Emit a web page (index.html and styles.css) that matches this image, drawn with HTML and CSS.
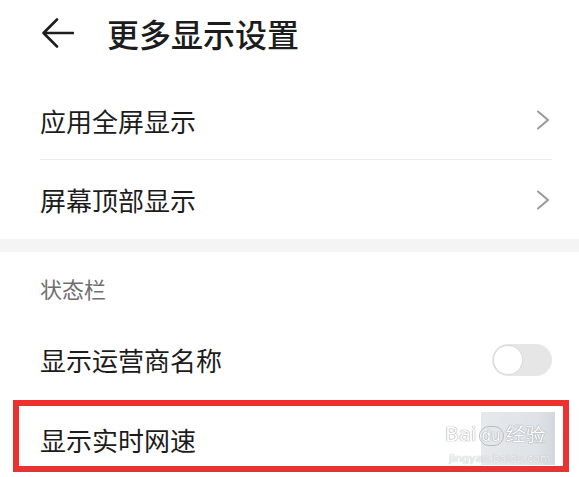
FILE: index.html
```html
<!DOCTYPE html>
<html>

<head>
  <title>更多显示设置</title>
  <link rel="stylesheet" href="styles.css">
</head>

<body>

  <div class="header">
    <svg class="back" width="32" height="30" viewBox="0 0 32 30">
      <path d="M31 15 H2 M15 1.5 L1.5 15 L15 28.5" fill="none" stroke="#1e1e1e" stroke-width="2.6" stroke-linecap="round" stroke-linejoin="round"/>
    </svg>
    <h1>更多显示设置</h1>
  </div>

  <div class="group">
    <div class="row">
      <span>应用全屏显示</span>
      <svg class="chevron" width="14" height="20" viewBox="0 0 14 20">
        <path d="M2 1.5 L12 10 L2 18.5" fill="none" stroke="#9a9a9a" stroke-width="2" stroke-linecap="round" stroke-linejoin="round"/>
      </svg>
    </div>
    <div class="row">
      <span>屏幕顶部显示</span>
      <svg class="chevron" width="14" height="20" viewBox="0 0 14 20">
        <path d="M2 1.5 L12 10 L2 18.5" fill="none" stroke="#9a9a9a" stroke-width="2" stroke-linecap="round" stroke-linejoin="round"/>
      </svg>
    </div>
  </div>

  <div class="band"></div>

  <div class="group">
    <div class="subhead">状态栏</div>
    <div class="row">
      <span>显示运营商名称</span>
      <div class="switch"><div class="knob"></div></div>
    </div>
    <div class="row last">
      <span>显示实时网速</span>
    </div>
  </div>

  <div class="highlight"></div>

  <div class="watermark">
    <div class="wm-back"></div>
    <div class="wm-logo">Bai<span class="paw">du</span>经验</div>
    <div class="wm-url">jingyan.baidu.com</div>
  </div>

</body>

</html>
```

FILE: styles.css
```css
body {
  margin: 0;
  background-color: white;
  font-family: "Noto Sans CJK SC", "Noto Sans", sans-serif;
  color: #1c1c1c;
  overflow: hidden;
  position: relative;
  height: 477px;
}

.header {
  height: 81px;
  display: flex;
  align-items: center;
  padding: 0 0 16px 42px;
  box-sizing: border-box;
}

.back {
  margin-right: 33px;
}

h1 {
  margin: 0;
  font-size: 32px;
  font-weight: 500;
  line-height: 40px;
}

.group {
  padding: 0 27px 0 40px;
}

.row {
  height: 78px;
  display: flex;
  align-items: center;
  justify-content: space-between;
  border-bottom: 1px solid #ececec;
  font-size: 26px;
}

.row.last {
  border-bottom: none;
  height: 80px;
}

.group .row:nth-child(2) {
  border-bottom: none;
  height: 79px;
}

.chevron {
  margin-right: 2px;
}

.band {
  height: 13px;
  background-color: #f4f4f4;
}

.subhead {
  height: 68px;
  padding-top: 24px;
  box-sizing: border-box;
  font-size: 22px;
  line-height: 24px;
  color: #6f6f6f;
}

.switch {
  width: 60px;
  height: 32px;
  border-radius: 16px;
  background-color: #e6e6e6;
  display: flex;
  align-items: center;
  padding-left: 2px;
  box-sizing: border-box;
}

.knob {
  width: 28px;
  height: 28px;
  border-radius: 50%;
  background-color: white;
  box-shadow: 0 0 0 1px #dadada;
}

.highlight {
  position: absolute;
  left: 13px;
  top: 400px;
  width: 556px;
  height: 72px;
  border: 6px solid #ea3330;
  box-sizing: border-box;
}

.watermark {
  position: absolute;
  left: 445px;
  top: 412px;
  width: 112px;
  height: 54px;
}

.wm-back {
  position: absolute;
  left: 36px;
  top: 0;
  width: 74px;
  height: 53px;
  background: linear-gradient(to right, #e6e9ec 0%, #dfe2e6 75%, #d4d8dc 100%);
}

.wm-logo {
  position: relative;
  margin-top: 11px;
  font-family: "DejaVu Sans", sans-serif;
  font-size: 20px;
  line-height: 22px;
  color: white;
  text-shadow: 0 0 1px #8f959b, 0 0 1px #8f959b;
  letter-spacing: 0;
  white-space: nowrap;
}

.paw {
  font-size: 15px;
  margin: 0 2px;
  padding: 0 2px;
  border: 1px solid #b6bbc0;
  border-radius: 10px;
}

.wm-url {
  position: relative;
  font-family: "DejaVu Sans", sans-serif;
  font-size: 11px;
  line-height: 14px;
  color: #f3f3f3;
  text-shadow: 0 0 1px #9ba0a6;
  margin-top: 5px;
  padding-left: 4px;
}
```
